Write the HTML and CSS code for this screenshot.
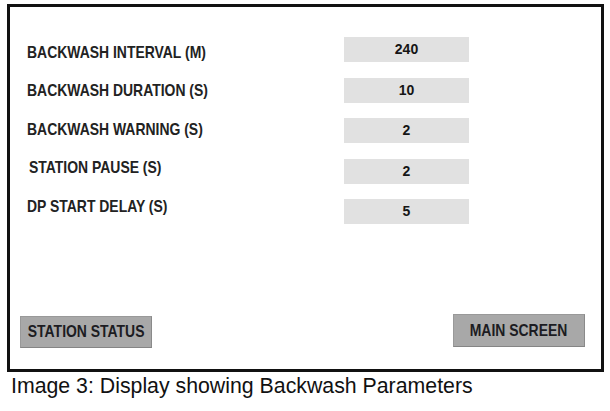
FILE: index.html
```html
<!DOCTYPE html>
<html lang="en">
<head>
    <meta charset="UTF-8">
    <meta name="viewport" content="width=device-width, initial-scale=1.0">
    <title>Backwash Parameters</title>
    <link rel="stylesheet" href="styles.css">
</head>
<body>

    <!-- Pantalla del panel -->
    <div class="panel">
        <div class="params">
            <!-- Nombres de los parámetros -->
            <div class="param-labels">
                <span class="param-label"><span class="narrow">BACKWASH INTERVAL (M)</span></span>
                <span class="param-label"><span class="narrow">BACKWASH DURATION (S)</span></span>
                <span class="param-label"><span class="narrow">BACKWASH WARNING (S)</span></span>
                <span class="param-label shifted"><span class="narrow">STATION PAUSE (S)</span></span>
                <span class="param-label"><span class="narrow">DP START DELAY (S)</span></span>
            </div>

            <!-- Valores -->
            <div class="param-values">
                <span class="param-value">240</span>
                <span class="param-value">10</span>
                <span class="param-value">2</span>
                <span class="param-value">2</span>
                <span class="param-value">5</span>
            </div>
        </div>

        <div class="panel-footer">
            <button class="nav-button"><span class="narrow">STATION STATUS</span></button>
            <button class="nav-button main"><span class="narrow">MAIN SCREEN</span></button>
        </div>
    </div>

    <p class="caption">Image 3: Display showing Backwash Parameters</p>

</body>
</html>
```

FILE: styles.css
```css
/* Fondo de la página */
body {
    margin: 0;
    padding: 0;
    background-color: white;
    font-family: "Liberation Sans", Arial, sans-serif;
}

/* Texto estrecho (tipo Arial Narrow) */
.narrow {
    display: inline-block;
    white-space: nowrap;
    transform: scaleX(0.82);
    transform-origin: left center;
}

/* Marco de la pantalla */
.panel {
    box-sizing: border-box;
    width: 597px;
    height: 368px;
    margin: 4px 0 0 7px;
    border: 3px solid #111;
    display: flex;
    flex-direction: column;
}

/* Columnas de parámetros */
.params {
    display: flex;
    padding-left: 17px;
}

.param-labels {
    width: 317px;
    padding-top: 26.75px;
    display: flex;
    flex-direction: column;
}

.param-label {
    height: 38.5px;
    line-height: 38.5px;
    font-weight: bold;
    font-size: 17px;
    color: #222;
    white-space: nowrap;
}

.param-label.shifted {
    padding-left: 2px;
}

.param-values {
    width: 125px;
    padding-top: 30px;
    display: flex;
    flex-direction: column;
    gap: 15.5px;
}

.param-value {
    height: 25px;
    line-height: 25px;
    background-color: #e1e1e1;
    text-align: center;
    font-weight: bold;
    font-size: 14px;
    color: #151515;
}

/* Botones inferiores */
.panel-footer {
    margin-top: auto;
    display: flex;
    justify-content: space-between;
    align-items: flex-end;
    padding: 0 16px 21px 10px;
}

.nav-button {
    box-sizing: border-box;
    width: 132px;
    height: 32px;
    padding: 0;
    display: flex;
    align-items: center;
    justify-content: center;
    background-color: #a8a8a8;
    border: 1px solid #999;
    border-bottom-color: #858585;
    border-right-color: #8a8a8a;
    font-family: "Liberation Sans", Arial, sans-serif;
    font-weight: bold;
    font-size: 17px;
    color: #1c1c22;
}

.nav-button .narrow {
    transform-origin: center center;
}

.nav-button.main {
    height: 33px;
    margin-bottom: 1px;
}

/* Pie de imagen */
.caption {
    margin: 2px 0 0 11px;
    font-size: 21.3px;
    line-height: 24px;
    color: #111;
}
```
